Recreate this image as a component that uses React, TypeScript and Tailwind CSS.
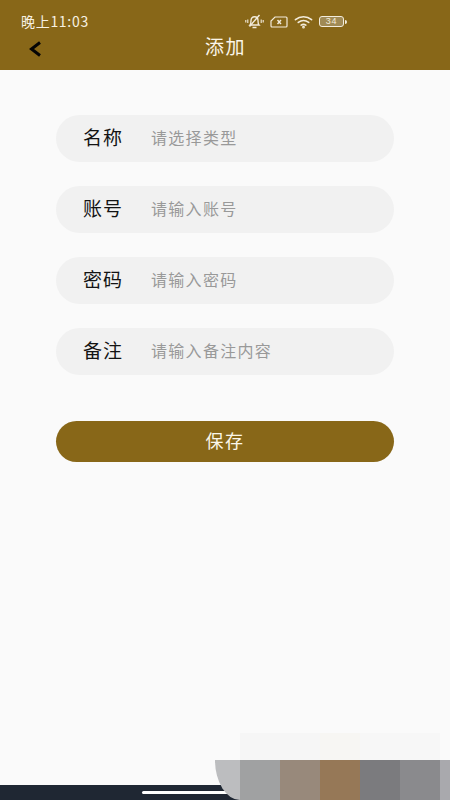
import React from "react";

const font = { fontFamily: '"Noto Sans CJK SC", "Liberation Sans", sans-serif' };

const fields = [
  { label: "名称", placeholder: "请选择类型" },
  { label: "账号", placeholder: "请输入账号" },
  { label: "密码", placeholder: "请输入密码" },
  { label: "备注", placeholder: "请输入备注内容" },
];

const swatches = [
  { top: "bg-[#f6f6f6]", bottom: "bg-[#a0a1a2]" },
  { top: "bg-[#f6f6f6]", bottom: "bg-[#98897b]" },
  { top: "bg-[#f7f6f3]", bottom: "bg-[#967857]" },
  { top: "bg-[#f7f7f7]", bottom: "bg-[#7b7b7e]" },
  { top: "bg-[#f7f7f7]", bottom: "bg-[#8a8a8d]" },
  { top: "bg-[#fafafa]", bottom: "bg-[#a9a9ad]" },
];

const StatusIcons = () => (
  <div className="flex items-center gap-[6px] text-[#f3ecdc]">
    <svg width="19" height="15" viewBox="0 0 19 15" fill="none" stroke="currentColor" strokeWidth="1.4">
      <path d="M5 11c1-1 1-2.500 1-4.500 0-2.200 1.500-3.700 3.500-3.700s3.500 1.500 3.500 3.700c0 2 0 3.500 1 4.500z" />
      <path d="M7.500 13.500h4M4.500 12.500 14.500 1" />
      <path d="M0.800 6v2.500M2.800 5.500v3.500M16.200 5.500v3.500M18.200 6v2.500" strokeWidth="1.100" />
    </svg>
    <svg width="18" height="12" viewBox="0 0 18 12" fill="none" stroke="currentColor" strokeWidth="1.2">
      <path d="M5 1h11a1 1 0 0 1 1 1v8a1 1 0 0 1-1 1H2a1 1 0 0 1-1-1V5z" />
      <path d="M7.500 4l3.500 4M11 4 7.500 8" strokeWidth="1.400" />
    </svg>
    <svg width="19" height="14" viewBox="0 0 20 14" fill="none" stroke="currentColor" strokeWidth="1.700" strokeLinecap="round">
      <path d="M1.500 4.500c5-4 12-4 17 0" />
      <path d="M4.500 7.500c3.300-2.500 7.700-2.500 11 0" />
      <path d="M7.500 10.300c1.500-1 3.500-1 5 0" />
      <circle cx="10" cy="12.500" r="0.600" />
    </svg>
    <div className="flex items-center">
      <div className="flex h-[11px] w-[25px] items-center justify-center rounded-[3px] border border-[#f3ecdc] bg-[#a08a55] text-[9px] leading-none text-[#f3ecdc]" style={{ fontFamily: '"Liberation Sans", sans-serif' }}>
        34
      </div>
      <div className="ml-px h-[4px] w-[1.500px] rounded-r-sm bg-[#f3ecdc]" />
    </div>
  </div>
);

export default function App() {
  return (
    <div className="relative flex h-[800px] w-[450px] flex-col overflow-hidden bg-[#fafafa]" style={font}>
      <header className="h-[70px] shrink-0 bg-[#886718]">
        <div className="relative flex h-[32px] items-center pl-[21px] pt-[10px] text-[14px] leading-none tracking-[0.7px] text-[#f7f1e3]">
          <span>晚上11:03</span>
          <div className="absolute left-[245px] top-[14px]">
            <StatusIcons />
          </div>
        </div>
        <div className="relative flex h-[30px] items-center justify-center pb-[1px] text-[19px] tracking-[1.500px] text-[#fbf6ea]">
          <span className="ml-[1px]">添加</span>
          <svg className="absolute left-[27px] top-[8px]" width="16" height="18" viewBox="0 0 16 18" fill="none" stroke="#050505" strokeWidth="3">
            <path d="M13 2.500 4.500 9l8.500 6.500" />
          </svg>
        </div>
      </header>

      <main className="flex flex-col gap-[24px] px-[56px] pt-[45px]">
        {fields.map((field) => (
          <div key={field.label} className="flex h-[47px] items-center rounded-full bg-[#f1f1f1] pb-[2px] pl-[27px]">
            <span className="w-[68px] text-[19px] tracking-[1px] text-[#141414]">{field.label}</span>
            <span className="pb-[1px] text-[16px] tracking-[1.300px] text-[#999999]">{field.placeholder}</span>
          </div>
        ))}
        <button className="mt-[22px] flex h-[41px] items-center justify-center rounded-full bg-[#886718] pb-[2px] text-[18px] tracking-[1.500px] text-[#fbf6ea]">
          保存
        </button>
      </main>

      {/* nav bar + blurred overlay at the bottom edge */}
      <div className="absolute bottom-0 left-0 h-[15px] w-[240px] bg-[#1f2733]">
        <div className="absolute left-[142px] top-[6px] h-[3px] w-[100px] rounded-full bg-white" />
      </div>
      <div className="absolute left-[215px] top-[760px] h-[40px] w-[25px] rounded-bl-[100%] bg-[#bcbdbf]" />
      <div className="absolute left-[240px] top-[733px] flex h-[67px]">
        {swatches.map((swatch, i) => (
          <div key={i} className={i === 5 ? "flex w-[10px] flex-col" : "flex w-[40px] flex-col"}>
            <div className={`h-[27px] ${swatch.top}`} />
            <div className={`h-[40px] ${swatch.bottom}`} />
          </div>
        ))}
      </div>
    </div>
  );
}
